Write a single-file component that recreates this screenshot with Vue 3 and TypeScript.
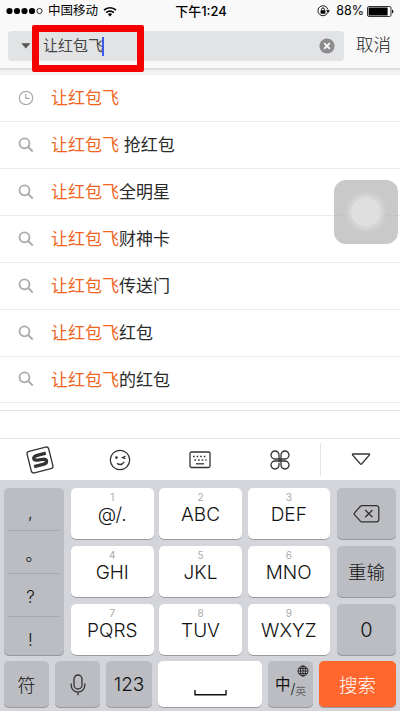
<script setup lang="ts">
interface Suggestion {
  icon: 'clock' | 'search'
  rest: string
}

interface LetterKey {
  digit: number
  label: string
}

const keyword = '让红包飞'

const suggestions: Suggestion[] = [
  { icon: 'clock', rest: '' },
  { icon: 'search', rest: ' 抢红包' },
  { icon: 'search', rest: '全明星' },
  { icon: 'search', rest: '财神卡' },
  { icon: 'search', rest: '传送门' },
  { icon: 'search', rest: '红包' },
  { icon: 'search', rest: '的红包' },
]

const punctuation: string[] = [',', '。', '?', '!']

const letterKeys: LetterKey[] = [
  { digit: 1, label: '@/.' },
  { digit: 2, label: 'ABC' },
  { digit: 3, label: 'DEF' },
  { digit: 4, label: 'GHI' },
  { digit: 5, label: 'JKL' },
  { digit: 6, label: 'MNO' },
  { digit: 7, label: 'PQRS' },
  { digit: 8, label: 'TUV' },
  { digit: 9, label: 'WXYZ' },
]
</script>

<template>
  <div class="phone">
    <header class="status">
      <div class="status-left">
        <svg class="signal" width="37" height="8" viewBox="0 0 37 8">
          <circle cx="3.5" cy="4" r="3.1" />
          <circle cx="11" cy="4" r="3.1" />
          <circle cx="18.5" cy="4" r="3.1" />
          <circle cx="26" cy="4" r="3.1" />
          <circle class="hollow" cx="33.5" cy="4" r="2.6" />
        </svg>
        <span class="carrier">中国移动</span>
        <svg class="wifi" width="14" height="11" viewBox="0 0 14 11">
          <path d="M1 4.2a8.6 8.6 0 0 1 12 0M3.2 6.6a5.4 5.4 0 0 1 7.6 0" />
          <path class="dot" d="M4.9 8.3a3 3 0 0 1 4.2 0L7 10.5z" />
        </svg>
      </div>
      <div class="time">下午1:24</div>
      <div class="status-right">
        <svg class="lock" width="13" height="12" viewBox="0 0 13 12">
          <path class="ring" d="M10.6 7.6A5 5 0 1 1 10.8 4.5" />
          <path d="M9 5.2h4L11 8z" />
          <rect x="3.6" y="5.2" width="4.8" height="3.5" rx=".4" />
          <path class="ring" d="M4.6 5.4V4.3a1.4 1.4 0 0 1 2.8 0v1.1" />
        </svg>
        <span class="percent">88%</span>
        <svg class="battery" width="27" height="11" viewBox="0 0 27 11">
          <rect class="case" x=".5" y=".5" width="23.5" height="10" rx="1.5" />
          <rect x="1.6" y="1.6" width="19" height="7.8" rx=".5" />
          <path d="M25 3.5q1.4.3 1.4 2t-1.4 2z" />
        </svg>
      </div>
    </header>

    <div class="search-bar">
      <div class="field">
        <svg class="caret-down" width="10" height="6" viewBox="0 0 10 6"><path d="M.3.2h9.2L4.9 5.6z" /></svg>
        <span class="query">{{ keyword }}</span>
        <i class="cursor"></i>
        <svg class="clear" width="16" height="16" viewBox="0 0 16 16">
          <circle cx="8" cy="8" r="7.6" />
          <path d="M5.2 5.2l5.6 5.6M10.8 5.2l-5.6 5.6" />
        </svg>
      </div>
      <span class="cancel">取消</span>
      <div class="highlight"></div>
    </div>

    <ul class="list">
      <li v-for="item in suggestions" :key="item.rest" class="row">
        <svg v-if="item.icon === 'clock'" class="row-icon thin" width="16" height="16" viewBox="0 0 16 16">
          <circle cx="8" cy="8" r="6.7" />
          <path d="M7.7 4v4.3h4" />
        </svg>
        <svg v-else class="row-icon" width="16" height="16" viewBox="0 0 16 16">
          <circle cx="6.5" cy="6.3" r="5" />
          <path d="M10.2 10l4.5 4.5" />
        </svg>
        <span class="row-text"><em>{{ keyword }}</em>{{ item.rest }}</span>
      </li>
    </ul>
    <div class="list-tail"></div>
    <div class="blank"></div>

    <div class="tools">
      <div class="tool">
        <svg width="30" height="30" viewBox="0 0 30 30">
          <g transform="rotate(-14 15 15)">
            <rect class="line" x="3.9" y="3.9" width="22.2" height="22.2" rx="2.5" />
            <path class="sogou" d="M22.3 9.8h-8.8q-4.2 0-4.2 2.4 0 2 3.4 2.3l5 .5q3.4.4 3.4 2.4 0 2.6-4.2 2.6H7.7" />
          </g>
        </svg>
      </div>
      <div class="tool">
        <svg width="22" height="22" viewBox="0 0 22 22">
          <circle class="line" cx="11" cy="11" r="9.7" />
          <circle class="fill" cx="7.5" cy="8.6" r="1.3" />
          <path class="line" d="M16.5 7l-3 1.6 3 1.1M8 14.4q4.2 2.8 7.2-1.6" />
        </svg>
      </div>
      <div class="tool">
        <svg width="22" height="18" viewBox="0 0 22 18">
          <rect class="line" x="1" y="1" width="20" height="15.5" rx="1.5" />
          <path class="dots" d="M4 5.5h14M5.5 9h12" />
          <path class="line" d="M7 12.8h8" />
        </svg>
      </div>
      <div class="tool">
        <svg width="20" height="20" viewBox="0 0 20 20">
          <path
            class="line"
            d="M9 9H5.1A4 4 0 1 1 9 5.1zM11 7.2V5.1A4 4 0 1 1 14.9 9H9M11 11h3.9A4 4 0 1 1 11 14.9zM9 12.8v2.1A4 4 0 1 1 5.1 11H11M9 9v3M11 7v4"
          />
        </svg>
      </div>
      <div class="tool last">
        <svg width="20" height="13" viewBox="0 0 20 13">
          <path class="line" d="M2 1h16q1 .2.3 1.2l-7.5 8.6q-.8.8-1.6 0L1.7 2.2Q1 1.2 2 1z" />
        </svg>
      </div>
    </div>

    <div class="keyboard">
      <div class="upper">
        <div class="punctuation">
          <span v-for="mark in punctuation" :key="mark" class="mark">{{ mark }}</span>
        </div>
        <div class="letters">
          <div v-for="key in letterKeys" :key="key.digit" class="key letter">
            <small>{{ key.digit }}</small>
            <span>{{ key.label }}</span>
          </div>
        </div>
        <div class="side">
          <div class="key grey">
            <svg width="28" height="20" viewBox="0 0 28 20">
              <path class="line" d="M9 1.7h14.5a2.3 2.3 0 0 1 2.3 2.3v11.6a2.3 2.3 0 0 1-2.3 2.3H9q-1 0-1.7-.8L1.5 10.7q-.7-.9 0-1.8l5.8-6.4q.7-.8 1.7-.8zM12.2 6l7.3 7.3M19.5 6l-7.3 7.3" />
            </svg>
          </div>
          <div class="key grey word">重输</div>
          <div class="key grey zero">0</div>
        </div>
      </div>
      <div class="bottom">
        <div class="key grey symbols">符</div>
        <div class="key grey">
          <svg width="16" height="22" viewBox="0 0 16 22">
            <rect class="line" x="4" y="1" width="8" height="14" rx="4" />
            <path class="line" d="M1.2 9.5v1.8a6.8 6.8 0 0 0 13.6 0V9.5M8 18v3.2" />
          </svg>
        </div>
        <div class="key grey numbers">123</div>
        <div class="key space">
          <svg width="33" height="6" viewBox="0 0 33 6"><path d="M1 0v4.7h31V0" /></svg>
        </div>
        <div class="key grey language">
          <span class="zh">中</span><span class="slash">/</span><span class="en">英</span>
          <svg class="globe" width="12" height="12" viewBox="0 0 12 12">
            <circle cx="6" cy="6" r="5" />
            <ellipse cx="6" cy="6" rx="2.5" ry="5" />
            <path d="M1 6h10M6 1v10M1.8 3.5h8.4M1.8 8.5h8.4" />
          </svg>
        </div>
        <div class="key submit">搜索</div>
      </div>
    </div>

    <div class="assistive"><i></i></div>
  </div>
</template>

<style>
body {
  margin: 0;
  overflow: hidden;
}
</style>

<style scoped>
.phone {
  position: relative;
  display: flex;
  flex-direction: column;
  box-sizing: border-box;
  width: 400px;
  height: 711px;
  overflow: hidden;
  background: #fff;
  color: #2a2a2a;
  font-family: Inter, "Noto Sans CJK SC", sans-serif;
}

svg {
  display: block;
  flex: none;
}

.status {
  display: grid;
  grid-template-columns: 1fr auto 1fr;
  align-items: center;
  height: 22px;
  padding: 0 6px;
  background: #f9f9f9;
  color: #000;
  font-size: 12.5px;
  line-height: 22px;
}

.status-left,
.status-right {
  display: flex;
  align-items: center;
}

.status-right {
  justify-content: flex-end;
}

.hollow {
  fill: none;
  stroke: #000;
  stroke-width: 0.8;
}

.carrier {
  margin-left: 5px;
}

.wifi {
  margin-left: 5px;
  fill: none;
  stroke: #000;
  stroke-width: 1.7;
}

.wifi .dot {
  fill: #000;
  stroke: none;
}

.time {
  padding-left: 2px;
  font-weight: 500;
  font-size: 13px;
}

.lock .ring {
  fill: none;
  stroke: #000;
  stroke-width: 0.9;
}

.percent {
  margin: 0 3px 0 6px;
}

.battery .case {
  fill: none;
  stroke: #000;
  stroke-width: 0.8;
}

.search-bar {
  position: relative;
  display: flex;
  align-items: flex-start;
  box-sizing: border-box;
  height: 53px;
  padding: 9px 8px 0;
  border-bottom: 5px solid #f2f2f2;
  background: linear-gradient(#f9f9f9 46px, #dedede 46px);
}

.field {
  display: flex;
  align-items: center;
  box-sizing: border-box;
  width: 336px;
  height: 30px;
  padding: 0 9px 0 13px;
  border-radius: 4px;
  background: #e2e3e5;
}

.caret-down {
  margin-right: 12px;
  fill: #555;
}

.query {
  color: #444;
  font-size: 15px;
  line-height: 30px;
}

.cursor {
  width: 2px;
  height: 19px;
  margin-left: -1px;
  background: #3c5be8;
}

.clear {
  margin-left: auto;
  fill: #8b8b8d;
}

.clear path {
  stroke: #fff;
  stroke-width: 1.7;
}

.cancel {
  margin-left: 12px;
  color: #222;
  font-size: 17.5px;
  font-weight: 300;
  line-height: 27px;
  white-space: nowrap;
}

.highlight {
  position: absolute;
  top: 3px;
  left: 32px;
  box-sizing: border-box;
  width: 112px;
  height: 47px;
  border: 7px solid #f50000;
  border-radius: 2px;
}

.list {
  margin: 0;
  padding: 0;
  list-style: none;
}

.row {
  display: flex;
  align-items: center;
  box-sizing: border-box;
  height: 46.93px;
  padding-left: 18px;
  border-bottom: 1px solid #ebebeb;
}

.row-icon {
  fill: none;
  stroke: #aaa;
  stroke-width: 1.8;
}

.row-icon.thin {
  stroke-width: 1.2;
}

.row-text {
  margin-left: 17px;
  padding-top: 1px;
  font-size: 17px;
  line-height: 44px;
  white-space: pre;
}

.row-text em {
  color: #f0661e;
  font-style: normal;
}

.list-tail {
  box-sizing: border-box;
  height: 7.5px;
  border-bottom: 1px solid #e4e4e4;
}

.blank {
  flex: 1;
}

.tools {
  display: grid;
  grid-template-columns: repeat(4, 80px) 80px;
  box-sizing: border-box;
  height: 42px;
  border-top: 1px solid #e2e2e2;
}

.tool {
  display: grid;
  place-items: center;
}

.tool.last {
  margin: 4px 0;
  border-left: 1px solid #e4e4e4;
}

.line {
  fill: none;
  stroke: #333;
  stroke-width: 1.3;
}

.fill {
  fill: #333;
}

.sogou {
  fill: none;
  stroke: #333;
  stroke-width: 3.3;
}

.dots {
  fill: none;
  stroke: #333;
  stroke-width: 1.6;
  stroke-dasharray: 1.6 2;
}

.keyboard {
  box-sizing: border-box;
  height: 231px;
  padding: 8px 4px 3px 4px;
  background: #d4d5da;
}

.upper {
  display: grid;
  grid-template-columns: 60px 259px 59px;
  column-gap: 7px;
  height: 168px;
}

.punctuation {
  display: grid;
  grid-template-rows: 43px 43px 43px 39px;
  box-sizing: border-box;
  padding: 0 4px;
  border-radius: 5px;
  background: #bbbdc3;
  box-shadow: inset 0 -1px #96989d;
}

.mark {
  box-sizing: border-box;
  padding-right: 7px;
  border-bottom: 1px solid #a7a9ae;
  color: #111;
  font-size: 17px;
  font-weight: 350;
  line-height: 46px;
  text-align: center;
}

.mark:nth-child(1) {
  line-height: 49px;
}

.mark:nth-child(2) {
  line-height: 48px;
  padding-right: 0;
}

.mark:last-child {
  border: 0;
}

.letters {
  display: grid;
  grid-template-columns: repeat(3, 82.5px);
  grid-template-rows: repeat(3, 52px);
  justify-content: space-between;
  align-content: space-between;
}

.side {
  display: grid;
  grid-template-rows: repeat(3, 52px);
  align-content: space-between;
}

.key {
  display: flex;
  align-items: center;
  justify-content: center;
  border-radius: 5px;
  background: #fff;
  box-shadow: inset 0 -1px #999ba0;
  color: #111;
}

.key.grey {
  background: #bbbdc3;
}

.letter {
  flex-direction: column;
  justify-content: flex-start;
}

.letter small {
  padding-top: 3px;
  color: #aaa;
  font-size: 10px;
  line-height: 12px;
}

.letter span {
  font-size: 19px;
  font-weight: 350;
  line-height: 24px;
}

.word {
  padding-bottom: 2px;
  box-sizing: border-box;
  font-size: 18.5px;
  font-weight: 300;
}

.zero {
  font-size: 20px;
  font-weight: 350;
}

.bottom {
  display: grid;
  grid-template-columns: 45px 45px 46px 104px 45px 77px;
  justify-content: space-between;
  height: 47px;
  margin-top: 5px;
}

.symbols {
  box-sizing: border-box;
  padding-bottom: 2px;
  font-size: 18px;
  font-weight: 300;
}

.numbers {
  font-size: 19px;
  font-weight: 350;
}

.space svg {
  margin-top: 17px;
  fill: none;
  stroke: #111;
  stroke-width: 1.4;
}

.language {
  position: relative;
}

.zh {
  padding-bottom: 3px;
  font-size: 15.5px;
}

.slash {
  padding-top: 8px;
  font-size: 14px;
  font-weight: 300;
}

.en {
  padding-top: 12px;
  color: #666;
  font-size: 10.5px;
}

.globe {
  position: absolute;
  top: 4px;
  right: 4px;
  fill: none;
  stroke: #222;
  stroke-width: 0.9;
}

.key.submit {
  box-sizing: border-box;
  padding-bottom: 2px;
  background: #ff672e;
  color: #fff;
  font-size: 18.5px;
  font-weight: 300;
}

.assistive {
  position: absolute;
  top: 180px;
  left: 334px;
  display: grid;
  place-items: center;
  width: 64px;
  height: 64px;
  border-radius: 12px;
  background: rgba(184, 184, 184, 0.76);
}

.assistive i {
  width: 30px;
  height: 30px;
  border-radius: 50%;
  background: rgba(232, 232, 232, 0.7);
  box-shadow: 0 0 0 3px rgba(225, 225, 225, 0.35), 0 0 0 6px rgba(225, 225, 225, 0.2);
}
</style>
